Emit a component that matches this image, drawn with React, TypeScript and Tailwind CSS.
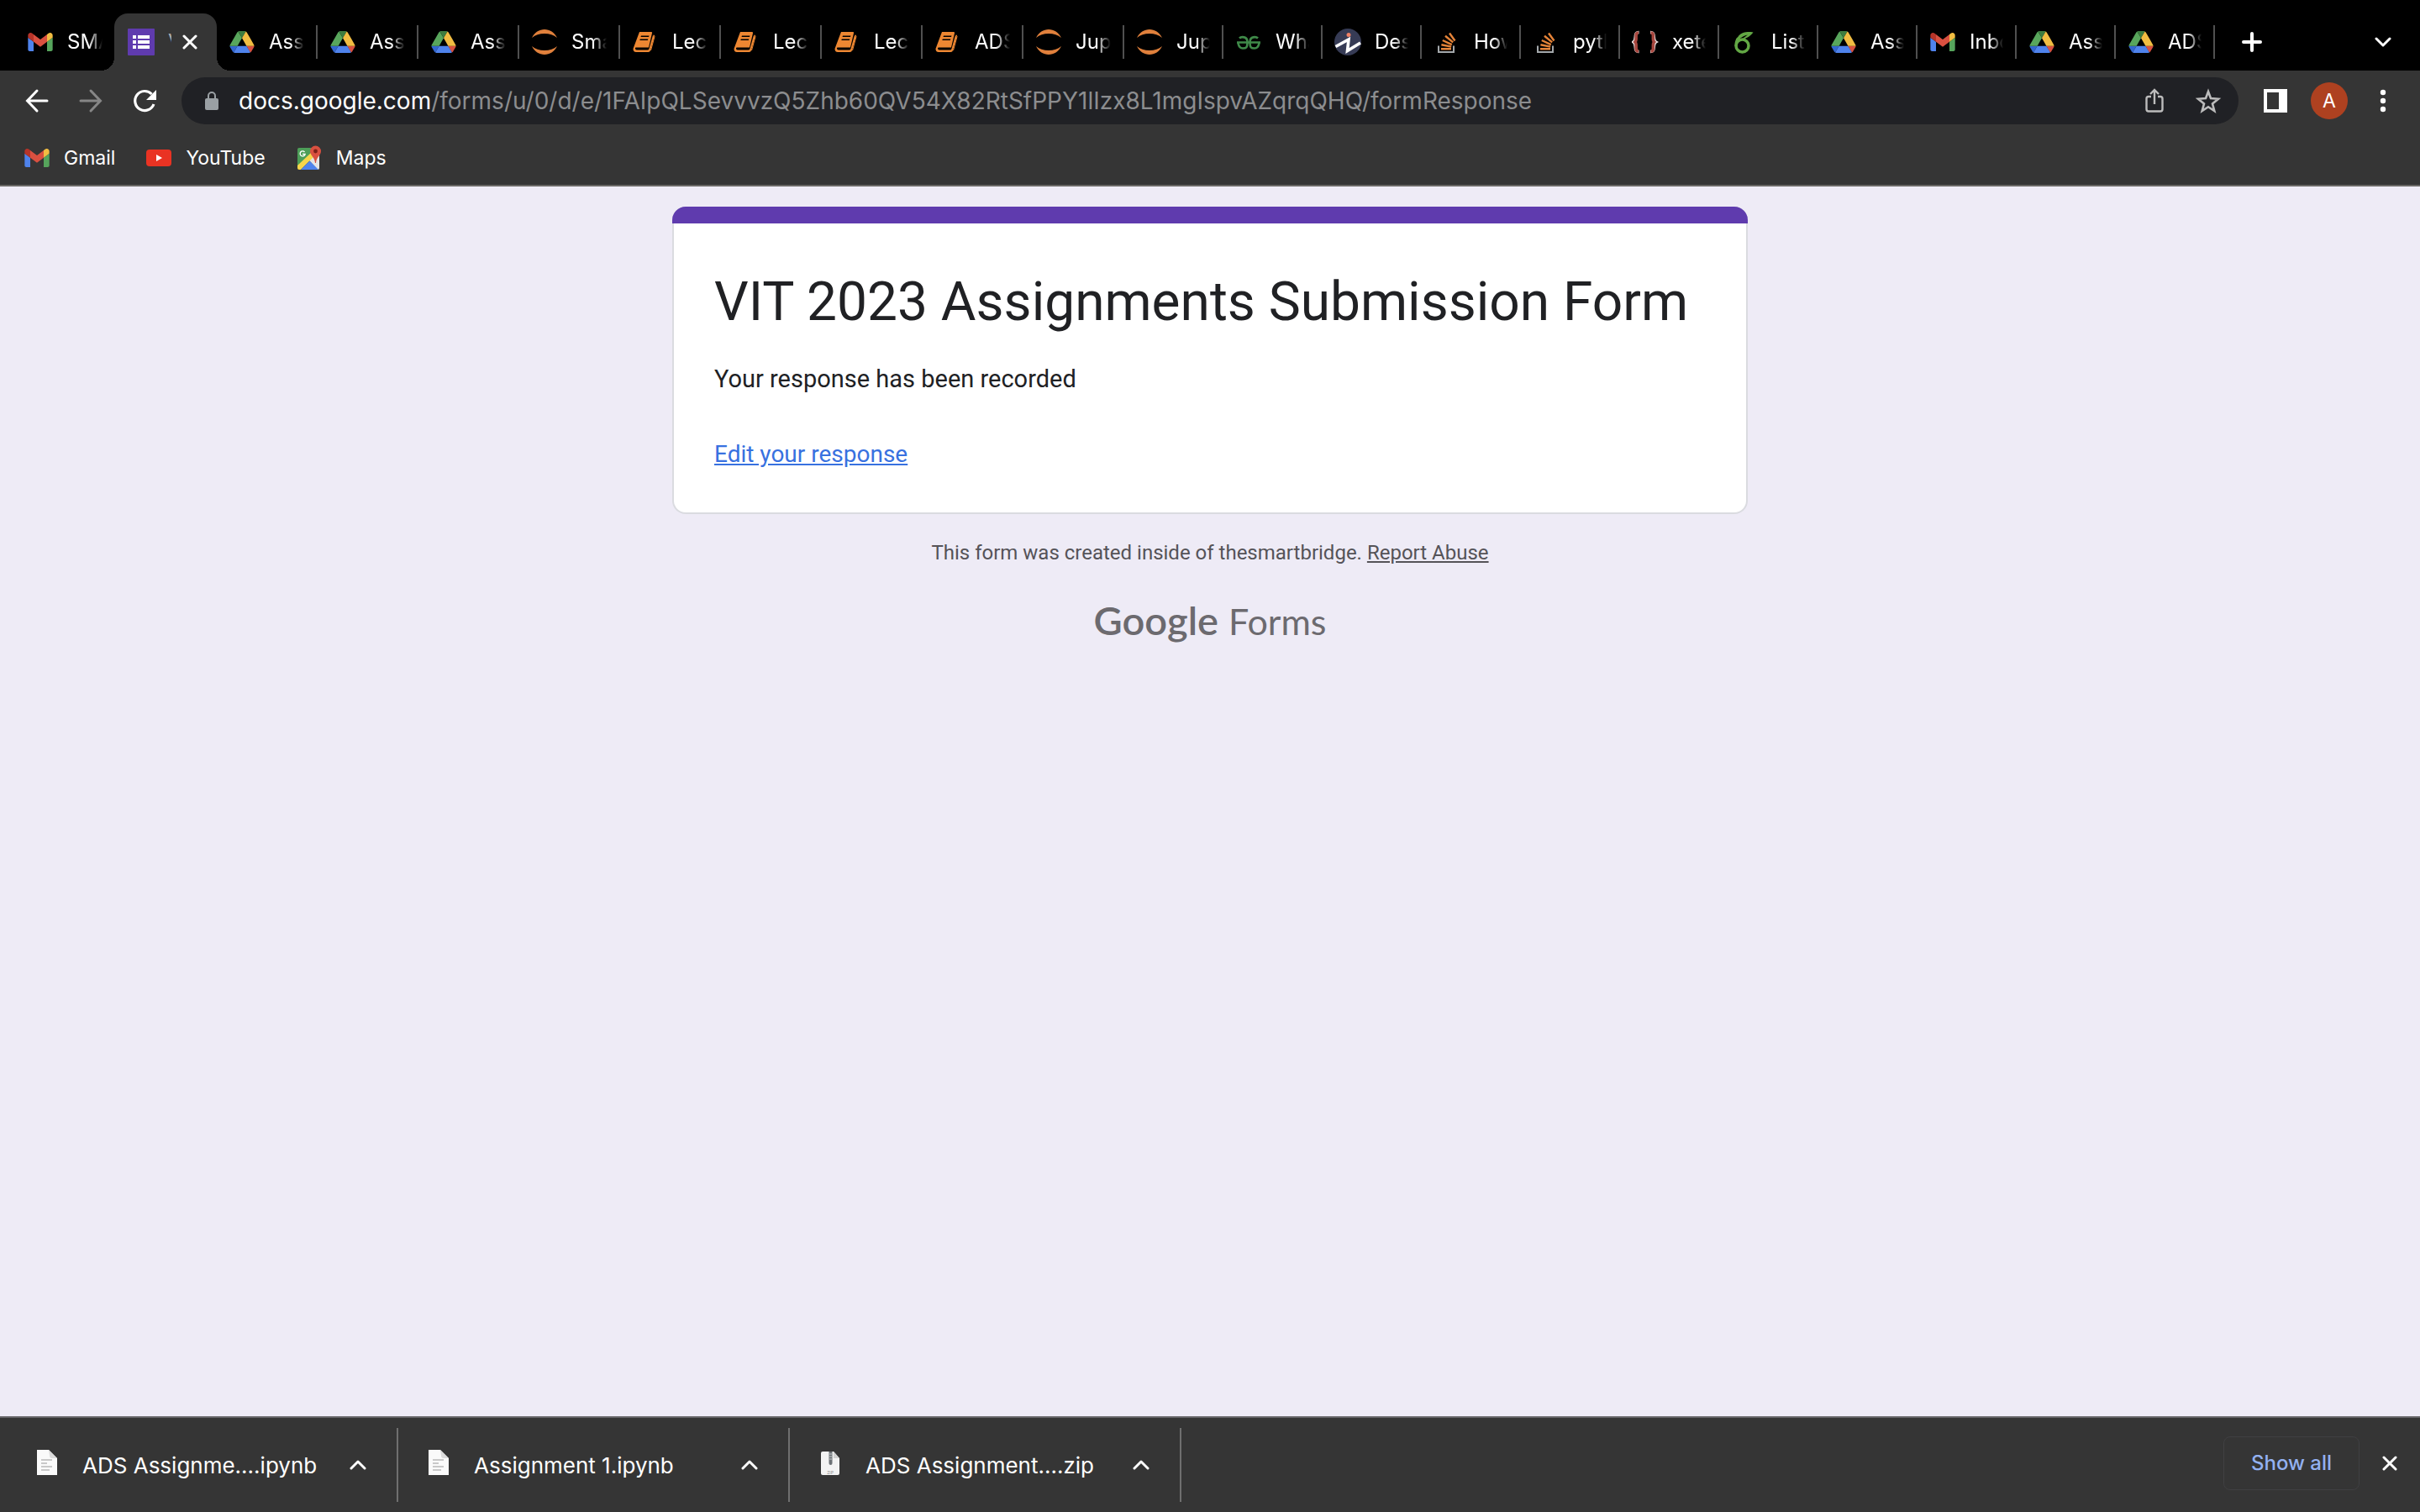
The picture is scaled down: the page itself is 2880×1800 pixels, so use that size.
import React from "react";

const sans = "font-['Inter','Liberation_Sans',sans-serif]";

function Gmail() {
  return (
    <svg viewBox="52 42 88 66" className="mx-auto h-[22px] w-[30px]" aria-hidden="true">
      <path fill="#4f83ec" d="M58 108h14V74L52 59v43c0 3.32 2.69 6 6 6" />
      <path fill="#56a55c" d="M120 108h14c3.32 0 6-2.69 6-6V59l-20 15" />
      <path fill="#f2bd42" d="M120 48v26l20-15v-8c0-7.42-8.47-11.65-14.4-7.2" />
      <path fill="#d95040" d="M72 74V48l24 18 24-18v26L96 92" />
      <path fill="#b63429" d="M52 51v8l20 15V48l-5.6-4.2c-5.94-4.45-14.4-.22-14.4 7.2" />
    </svg>
  );
}

function Drive() {
  return (
    <svg viewBox="0 0 87.3 78" className="mx-auto h-[26px] w-[30px]" aria-hidden="true">
      <path fill="#3367d0" d="m6.6 66.85 3.85 6.65c.8 1.4 1.95 2.5 3.3 3.3l13.75-23.8h-27.5c0 1.55.4 3.1 1.2 4.5z" />
      <path fill="#58a65c" d="m43.65 25-13.75-23.8c-1.35.8-2.5 1.9-3.3 3.3l-25.4 44a9.06 9.06 0 0 0 -1.2 4.5h27.5z" />
      <path fill="#d95140" d="m73.55 76.8c1.35-.8 2.5-1.9 3.3-3.3l1.6-2.75 7.65-13.25c.8-1.4 1.2-2.95 1.2-4.5h-27.502l5.852 11.5z" />
      <path fill="#3d7d40" d="m43.65 25 13.75-23.8c-1.35-.8-2.9-1.2-4.5-1.2h-18.5c-1.6 0-3.15.45-4.5 1.2z" />
      <path fill="#4f83ec" d="m59.8 53h-32.3l-13.75 23.8c1.35.8 2.9 1.2 4.5 1.2h50.8c1.6 0 3.15-.45 4.5-1.2z" />
      <path fill="#f2bd42" d="m73.4 26.5-12.7-22c-.8-1.4-1.95-2.5-3.3-3.3l-13.75 23.8 16.15 28h27.45c0-1.55-.4-3.1-1.2-4.5z" />
    </svg>
  );
}

function Forms() {
  return (
    <svg viewBox="0 0 32 32" className="size-8" aria-hidden="true">
      <rect width="32" height="32" rx="1" fill="#5f3bae" />
      <path fill="#fff" d="M6 8h4v4H6zM12 8h14v4H12zM6 14h4v4H6zM12 14h14v4H12zM6 20h4v4H6zM12 20h14v4H12z" />
    </svg>
  );
}

function Jupyter() {
  return (
    <svg viewBox="0 0 32 32" className="size-8" aria-hidden="true">
      <path fill="#e0803c" d="M1 11C4 4.500 10 1 16 1s12 3.500 15 10C27 7.500 22 6 16 6S5 7.500 1 11zM1 21c3 6.500 9 10 15 10s12-3.500 15-10c-4 3.500-9 5-15 5S5 24.500 1 21z" />
    </svg>
  );
}

function Book() {
  return (
    <svg viewBox="0 0 32 32" className="size-8" aria-hidden="true">
      <path fill="#ee8732" d="M9 4H23q1.500 0 1 1.500L20 22.500H5q-1.500 0-1 1.500t2 1.500h12.500q1.500 0 2-1.500L25 8q2 .5 1.500 2.500L22 26q-.5 2-2.500 2H5q-3.500 0-3.500-4z" />
      <path fill="#000" d="M11 8.500h9.500l-.5 1.600h-9.500zM9.800 12.500h9.500l-.5 1.600h-9.500z" />
      <path fill="none" stroke="#ee8732" strokeWidth="1" d="M26 7.500l1 2L22.500 26" />
    </svg>
  );
}

function Geeks() {
  return (
    <svg viewBox="0 0 32 32" className="size-8" fill="none" stroke="#3f8a49" strokeWidth="2.600" aria-hidden="true">
      <path d="M5 11.500C7 9.500 14.500 9 14.500 16S13 23.500 9 23.500 4 20 3.500 17.500M27 11.500C25 9.500 17.500 9 17.500 16s1.500 7.500 5.500 7.500 5-3.500 5.500-6M2 16.500h28" />
    </svg>
  );
}

function Ine() {
  return (
    <svg viewBox="0 0 32 32" className="size-8" aria-hidden="true">
      <circle cx="16" cy="16" r="16" fill="#363b55" />
      <path fill="none" stroke="#fff" strokeWidth="3.600" d="M1.500 21.500 17 13l-1.500 13.500L31 17" />
      <circle cx="17" cy="7.500" r="2.500" fill="#ee8166" />
    </svg>
  );
}

function Overflow() {
  return (
    <svg viewBox="0 0 32 32" className="size-8" fill="none" aria-hidden="true">
      <path stroke="#a4a8ab" strokeWidth="2" d="M6 20.500V28h18v-7.500" />
      <path stroke="#e58338" strokeWidth="2.400" d="M9 24.200h12M9.400 19.200l11.800 2.400M10.800 14l11 5.200M14 8.800l9.200 7.600M19 5.500l6.500 9" />
    </svg>
  );
}

function Braces() {
  return (
    <svg viewBox="0 0 32 32" className="size-8" fill="none" aria-hidden="true">
      <path stroke="#e8e0e0" strokeWidth="3.600" d="M8.500 4.500c-7 0-2 9-6.500 11.500C6.500 18.500 1.500 27.500 8.500 27.500M22 4.500c7 0 2 9 6.500 11.500C24 18.500 29 27.500 22 27.500" />
      <path stroke="#a8473f" strokeWidth="3.600" d="M8 5c-5.500 0-1 8-4 11 3 3-1.500 11 4 11M22.500 5c5.500 0 1 8 4 11-3 3 1.500 11-4 11" />
    </svg>
  );
}

function Overleaf() {
  return (
    <svg viewBox="0 0 32 32" className="size-8" fill="none" stroke="#62a744" aria-hidden="true">
      <circle cx="13.500" cy="20.500" r="7.500" strokeWidth="3.500" />
      <path strokeWidth="3" d="M6 21c-.5-7 3-11.500 9-14" />
      <path fill="#62a744" stroke="none" d="M9 9c4-5 11-5.500 17.500-4.500C24 8 20 11.500 13 13c3-3 5-4 7-5.500C16 8 12 10 8.500 14.500z" />
    </svg>
  );
}

type Tab = { icon: React.ReactNode; label: string; narrow?: boolean; divider?: boolean };

const tabs: Tab[] = [
  { icon: <Drive />, label: "Assi" },
  { icon: <Drive />, label: "Assi", divider: true },
  { icon: <Drive />, label: "Assi", divider: true },
  { icon: <Jupyter />, label: "Smar", divider: true },
  { icon: <Book />, label: "Lect", divider: true },
  { icon: <Book />, label: "Lect", divider: true },
  { icon: <Book />, label: "Lect", divider: true },
  { icon: <Book />, label: "ADS", divider: true },
  { icon: <Jupyter />, label: "Jupy", divider: true },
  { icon: <Jupyter />, label: "Jupy", divider: true, narrow: true },
  { icon: <Geeks />, label: "Wha", divider: true, narrow: true },
  { icon: <Ine />, label: "Desc", divider: true, narrow: true },
  { icon: <Overflow />, label: "How", divider: true, narrow: true },
  { icon: <Overflow />, label: "pyth", divider: true, narrow: true },
  { icon: <Braces />, label: "xetex", divider: true, narrow: true },
  { icon: <Overleaf />, label: "Lists", divider: true, narrow: true },
  { icon: <Drive />, label: "Assi", divider: true, narrow: true },
  { icon: <Gmail />, label: "Inbox", divider: true, narrow: true },
  { icon: <Drive />, label: "Assi", divider: true, narrow: true },
  { icon: <Drive />, label: "ADS", divider: true, narrow: true },
];

function TabItem({ icon, label, narrow, divider }: Tab) {
  return (
    <button type="button" className={`flex h-full items-center ${narrow ? "w-[118px]" : "w-[120px]"}`}>
      <span className={`h-10 w-0.5 shrink-0 ${divider ? "bg-[#505050]" : ""}`} />
      <span className="ml-3.5 w-8 shrink-0">{icon}</span>
      <span className="mr-3.5 ml-4 min-w-0 flex-1 overflow-hidden text-left whitespace-nowrap [mask-image:linear-gradient(to_right,black_60%,transparent)]">
        {label}
      </span>
    </button>
  );
}

function Doc() {
  return (
    <svg viewBox="0 0 24 30" className="h-[30px] w-6" aria-hidden="true">
      <path fill="#fafafa" d="M0 0h14l10 10v20H0z" />
      <path fill="#dcdcdc" d="M14 0l10 10h-6q-3 0-3-3z" />
      <path stroke="#b9b9b9" strokeWidth="1.600" d="M5 12h13M5 16h7M5 20h13M5 24h10" />
    </svg>
  );
}

function Zip() {
  return (
    <svg viewBox="0 0 24 30" className="h-[30px] w-6" aria-hidden="true">
      <path fill="#f3f3f3" d="M3 2h13l7 8v18q0 2-2 2H3q-2 0-2-2V4q0-2 2-2z" />
      <path fill="#d2d2d2" d="M16 2l7 8h-7z" />
      <path fill="#6d7276" d="M10.500 2h4v14q0 2-2 2t-2-2z" />
      <path stroke="#c9cdd0" strokeWidth="1" d="M11 5h3M11 8h3M11 11h3" />
      <text x="12" y="29" fontSize="5" textAnchor="middle" fill="#8b8b8b" className="font-['Inter',sans-serif]">ZIP</text>
    </svg>
  );
}

const downloads = [
  { icon: <Doc />, name: "ADS Assignme....ipynb" },
  { icon: <Doc />, name: "Assignment 1.ipynb" },
  { icon: <Zip />, name: "ADS Assignment....zip" },
];

function Cross() {
  return (
    <svg viewBox="0 0 18 18" className="size-[18px]" stroke="#fff" strokeWidth="3" strokeLinecap="round" aria-hidden="true">
      <path d="M2 2l14 14M16 2L2 16" />
    </svg>
  );
}

export default function App() {
  return (
    <div className={`flex min-h-screen flex-col bg-[#eeebf6] ${sans}`}>
      <header className="text-[23px] leading-8 text-white">
        <div className="flex h-[84px] items-stretch bg-black pt-4 pl-4 text-[24px]">
          <TabItem icon={<Gmail />} label="SMA" />
          <div className="relative flex w-[122px] items-center rounded-t-2xl bg-[#353535] pr-[23px] pl-4 before:absolute before:bottom-0 before:-left-4 before:size-4 before:bg-[radial-gradient(circle_at_0_0,transparent_16px,#353535_16px)] after:absolute after:-right-4 after:bottom-0 after:size-4 after:bg-[radial-gradient(circle_at_100%_0,transparent_16px,#353535_16px)]">
            <Forms />
            <span className="ml-4 w-1 overflow-hidden text-[#aaaaaa]">V</span>
            <button type="button" aria-label="Close tab" className="ml-auto">
              <Cross />
            </button>
          </div>
          <div className="-ml-0.5 flex">
            {tabs.map((t, i) => (
              <TabItem key={i} {...t} />
            ))}
          </div>
          <span className="h-10 w-0.5 self-center bg-[#505050]" />
          <button type="button" aria-label="New tab" className="ml-8">
            <svg viewBox="0 0 24 24" className="size-6" stroke="#fff" strokeWidth="4" strokeLinecap="round" aria-hidden="true">
              <path d="M12 2v20M2 12h20" />
            </svg>
          </button>
          <button type="button" aria-label="Search tabs" className="mr-[34px] ml-auto">
            <svg viewBox="0 0 20 12" className="h-3 w-5" fill="none" stroke="#fff" strokeWidth="3" strokeLinecap="round" strokeLinejoin="round" aria-hidden="true">
              <path d="M2 2l8 8 8-8" />
            </svg>
          </button>
        </div>

        <div className="flex items-center bg-[#353535] pt-2 pr-9 pl-7">
          <button type="button" aria-label="Back">
            <svg viewBox="0 0 32 32" className="size-8" fill="none" stroke="#fff" strokeWidth="3" strokeLinecap="round" aria-hidden="true">
              <path d="M28 16H5M16 4L4.500 16 16 28" />
            </svg>
          </button>
          <button type="button" aria-label="Forward" className="ml-8">
            <svg viewBox="0 0 32 32" className="size-8" fill="none" stroke="#868686" strokeWidth="3" strokeLinecap="round" aria-hidden="true">
              <path d="M4 16h23M16 4l11.500 12L16 28" />
            </svg>
          </button>
          <button type="button" aria-label="Reload" className="ml-8">
            <svg viewBox="0 0 32 32" className="size-8" fill="none" aria-hidden="true">
              <path stroke="#fff" strokeWidth="3.200" d="M24.500 8A11.500 11.500 0 1 0 27 20" />
              <path fill="#fff" d="M30 3v12H18z" />
            </svg>
          </button>
          <div className="ml-7 flex h-14 flex-1 items-center rounded-full bg-[#202125] pr-5 pl-7">
            <svg viewBox="0 0 16 22" className="h-[22px] w-4" aria-hidden="true">
              <rect y="8" width="16" height="14" rx="2" fill="#9aa0a4" />
              <path fill="none" stroke="#9aa0a4" strokeWidth="2" d="M4 9V5a4 4 0 0 1 8 0v4" />
            </svg>
            <div className="ml-6 text-[28px] whitespace-nowrap text-[#8c8d8f]">
              <span className="text-white">docs.google.com</span>
              /forms/u/0/d/e/1FAIpQLSevvvzQ5Zhb60QV54X82RtSfPPY1lIzx8L1mgIspvAZqrqQHQ/formResponse
            </div>
            <button type="button" aria-label="Share" className="ml-auto">
              <svg viewBox="0 0 24 32" className="h-8 w-6" fill="none" stroke="#bcbcbc" strokeWidth="2.400" aria-hidden="true">
                <path d="M8 11H5q-2.500 0-2.500 2.500v12.500q0 2.500 2.500 2.500h14q2.500 0 2.500-2.500V13.500Q21.500 11 19 11h-3M12 20V4M7 8l5-5 5 5" />
              </svg>
            </button>
            <button type="button" aria-label="Bookmark" className="ml-9">
              <svg viewBox="0 0 32 32" className="size-8" fill="none" stroke="#bcbcbc" strokeWidth="2.600" aria-hidden="true">
                <path d="M16 5l3 8 9 .7-7 5.800 2.300 8.500L16 23.200 8.700 28 11 19.500l-7-5.800 9-.7z" />
              </svg>
            </button>
          </div>
          <button type="button" aria-label="Side panel" className="ml-[30px]">
            <svg viewBox="0 0 28 28" className="size-7" aria-hidden="true">
              <path fill="#fff" fillRule="evenodd" d="M0 0h28v28H0zM4 4v20h14V4z" />
            </svg>
          </button>
          <button type="button" aria-label="Profile" className="ml-7 size-11 rounded-full bg-[#ae4120]">
            A
          </button>
          <button type="button" aria-label="Menu" className="ml-[34px]">
            <svg viewBox="0 0 16 28" className="h-7 w-4" fill="#fff" aria-hidden="true">
              <circle cx="8" cy="4" r="3.200" />
              <circle cx="8" cy="14" r="3.200" />
              <circle cx="8" cy="24" r="3.200" />
            </svg>
          </button>
        </div>

        <nav className="flex h-[74px] items-center gap-9 border-b-2 border-[#6a6865] bg-[#353535] pt-2 pl-7">
          <a href="#gmail" className="flex items-center gap-4">
            <span className="w-8"><Gmail /></span>Gmail
          </a>
          <a href="#youtube" className="flex items-center gap-4">
            <svg viewBox="0 0 32 32" className="size-8" aria-hidden="true">
              <rect x="1" y="6" width="30" height="20" rx="4" fill="#e93323" />
              <path fill="#fff" d="M13 12l7 4-7 4z" />
            </svg>
            YouTube
          </a>
          <a href="#maps" className="flex items-center gap-4">
            <svg viewBox="0 0 32 32" className="size-8" aria-hidden="true">
              <path fill="#4d9e58" d="M4 4h21L2 26V6q0-2 2-2z" />
              <path fill="#e4e4e4" d="M22 12l6-2v18q0 2-2 2L16 19z" />
              <path fill="#f6d64b" d="M2 25L19 9l4 4L6 30H4q-2 0-2-2z" />
              <path fill="#4f83ec" d="M6 30l10.500-10.500L27 30z" />
              <path fill="#d95040" d="M23.500 1.500a6.500 6.500 0 0 1 6.500 6.500c0 5-5.500 7-6 14h-1c-.5-7-6-9-6-14a6.500 6.500 0 0 1 6.500-6.500z" />
              <circle cx="23.500" cy="8" r="2.400" fill="#7a2119" />
              <path fill="none" stroke="#fff" strokeWidth="1.400" d="M10.500 9a3 3 0 1 0 .6 2.500H8" />
            </svg>
            Maps
          </a>
        </nav>
      </header>

      <main className="flex flex-1 flex-col items-center pt-6 font-['Roboto','Liberation_Sans',sans-serif]">
        <section className="w-full max-w-[1280px] overflow-hidden rounded-2xl bg-[#dadbe0]">
          <div className="h-5 bg-[#5f3bae]" />
          <div className="mx-0.5 mb-0.5 rounded-b-[14px] bg-white px-12 pt-[51px] pb-12 text-[#202124]">
            <h1 className="text-[64px] leading-[86px]">VIT 2023 Assignments Submission Form</h1>
            <p className="mt-7 text-[29px] leading-10">Your response has been recorded</p>
            <a href="#edit" className="mt-[50px] mb-px block w-fit text-[28px] leading-10 text-[#3871e0] underline">
              Edit your response
            </a>
          </div>
        </section>
        <p className="mt-[30px] text-[24px] leading-8 text-[#555358]">
          This form was created inside of thesmartbridge.{" "}
          <a href="#report" className="underline">Report Abuse</a>
        </p>
        <a href="#forms" className="mt-9 flex items-baseline gap-3 font-['Lato',sans-serif] text-[43px] leading-[56px] text-[#6c6a6f]">
          <span className="text-[47px] font-semibold">Google</span>
          <span>Forms</span>
        </a>
      </main>

      <footer className="flex h-[114px] items-center border-t-2 border-[#666568] bg-[#353535] pr-6 pl-2 text-[26px] leading-8 text-white">
        {downloads.map((d) => (
          <div key={d.name} className="flex h-[88px] w-[466px] items-center border-r-2 border-[#6f6f6f] pr-9 pl-9">
            <span className="pb-1.5">{d.icon}</span>
            <span className="ml-[30px] pt-0.5 whitespace-nowrap">{d.name}</span>
            <button type="button" aria-label={`Options for ${d.name}`} className="ml-auto">
              <svg viewBox="0 0 20 12" className="h-3 w-5" fill="none" stroke="#fff" strokeWidth="3" strokeLinecap="round" strokeLinejoin="round" aria-hidden="true">
                <path d="M2 10l8-8 8 8" />
              </svg>
            </button>
          </div>
        ))}
        <button type="button" className="mb-1 ml-auto h-16 w-[162px] rounded-lg border border-[#404042] text-[24px] font-medium text-[#93b1f1]">
          Show all
        </button>
        <button type="button" aria-label="Close downloads" className="mr-[3px] mb-1 ml-[27px]">
          <Cross />
        </button>
      </footer>
    </div>
  );
}
